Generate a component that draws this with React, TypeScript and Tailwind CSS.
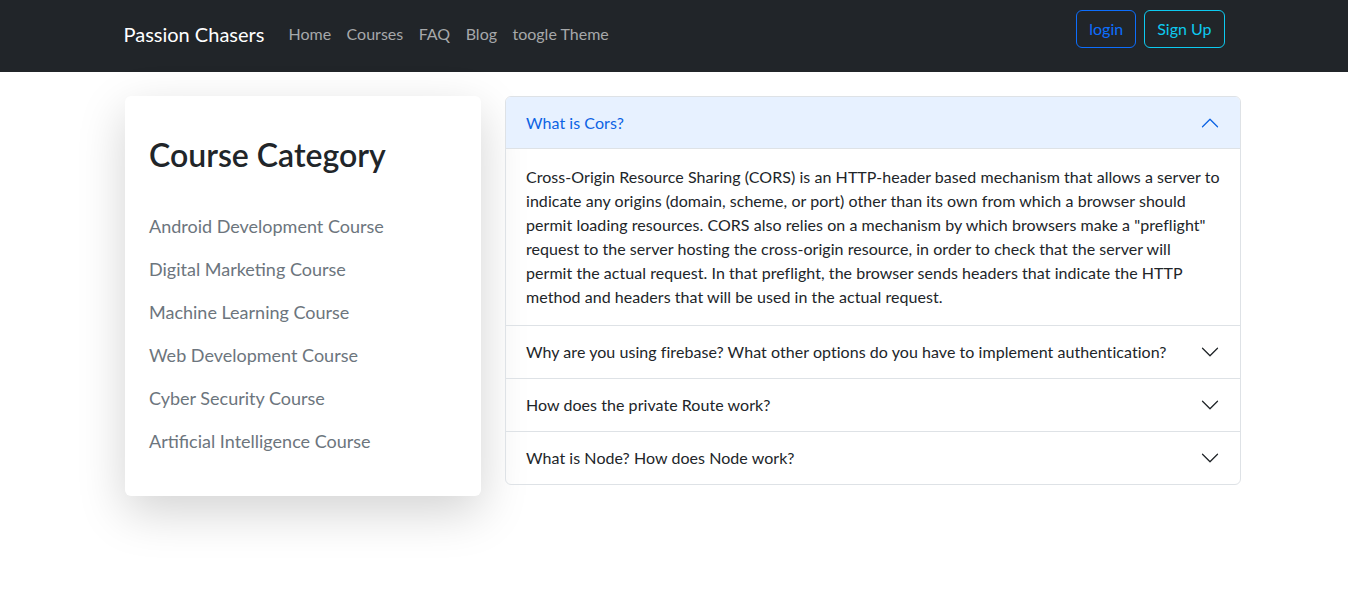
import React from 'react';

const categories = [
  'Android Development Course',
  'Digital Marketing Course',
  'Machine Learning Course',
  'Web Development Course',
  'Cyber Security Course',
  'Artificial Intelligence Course',
];

const questions = [
  'Why are you using firebase? What other options do you have to implement authentication?',
  'How does the private Route work?',
  'What is Node? How does Node work?',
];

// lines as they wrap in the original
const corsLines = [
  'Cross-Origin Resource Sharing (CORS) is an HTTP-header based mechanism that allows a server to',
  'indicate any origins (domain, scheme, or port) other than its own from which a browser should',
  'permit loading resources. CORS also relies on a mechanism by which browsers make a "preflight"',
  'request to the server hosting the cross-origin resource, in order to check that the server will',
  'permit the actual request. In that preflight, the browser sends headers that indicate the HTTP',
  'method and headers that will be used in the actual request.',
];

const Chevron: React.FC<{ up?: boolean }> = ({ up }) => (
  <svg
    viewBox="0 0 16 16"
    className={up ? 'w-5 h-5 rotate-180 fill-[#0c63e4]' : 'w-5 h-5 fill-[#212529]'}
  >
    <path
      fillRule="evenodd"
      d="M1.646 4.646a.5.5 0 0 1 .708 0L8 10.293l5.646-5.647a.5.5 0 0 1 .708.708l-6 6a.5.5 0 0 1-.708 0l-6-6a.5.5 0 0 1 0-.708z"
    />
  </svg>
);

const Navbar = () => (
  <nav className="bg-[#212529] h-[72px]">
    <div className="w-[1101px] mx-auto h-full flex items-center justify-between">
      <div className="flex items-center -mt-[4px]">
        <span className="text-white text-[20px] mr-6">Passion Chasers</span>
        <div className="flex items-center gap-[15.5px] text-[16px] text-[#a6a8aa]">
          <span>Home</span>
          <span>Courses</span>
          <span>FAQ</span>
          <span>Blog</span>
          <span>toogle Theme</span>
        </div>
      </div>
      <div className="flex items-center gap-2 -mt-[15px]">
        <button className="h-[38px] px-3 border border-[#0d6efd] text-[#0d6efd] rounded-md text-[16px]">
          login
        </button>
        <button className="h-[38px] px-3 border border-[#0dcaf0] text-[#0dcaf0] rounded-md text-[16px]">
          Sign Up
        </button>
      </div>
    </div>
  </nav>
);

export default function App() {
  return (
    <div className="min-h-screen bg-white text-[#212529]" style={{ fontFamily: 'Lato, sans-serif' }}>
      <Navbar />
      <main className="w-[1116px] ml-[125px] mt-6 flex items-start gap-[24px]">
        <aside className="w-[356px] shrink-0 bg-white rounded-md shadow-[0_16px_48px_rgba(0,0,0,0.175)] px-6 pt-[40px] pb-[43px]">
          <h2 className="text-[32px] font-semibold leading-[1.2] mb-[40px]">Course Category</h2>
          <ul className="flex flex-col gap-[19px]">
            {categories.map((c) => (
              <li key={c} className="text-[18px] leading-[24px] text-[#6c757d]">
                {c}
              </li>
            ))}
          </ul>
        </aside>
        <section className="flex-1 border border-[#dee2e6] rounded-md overflow-hidden tracking-[0.05px]">
          <div className="h-[52px] px-5 flex items-center justify-between bg-[#e7f1ff] text-[#0c63e4] border-b border-[#dee2e6] text-[16px]">
            <span>What is Cors?</span>
            <Chevron up />
          </div>
          <div className="px-5 py-4 text-[16px] leading-[24px] border-b border-[#dee2e6] whitespace-nowrap">
            {corsLines.map((l) => (
              <div key={l}>{l}</div>
            ))}
          </div>
          {questions.map((q, i) => (
            <div
              key={q}
              className={
                i < questions.length - 1
                  ? 'h-[53px] px-5 flex items-center justify-between border-b border-[#dee2e6] text-[16px]'
                  : 'h-[52px] px-5 flex items-center justify-between text-[16px]'
              }
            >
              <span>{q}</span>
              <Chevron />
            </div>
          ))}
        </section>
      </main>
    </div>
  );
}
